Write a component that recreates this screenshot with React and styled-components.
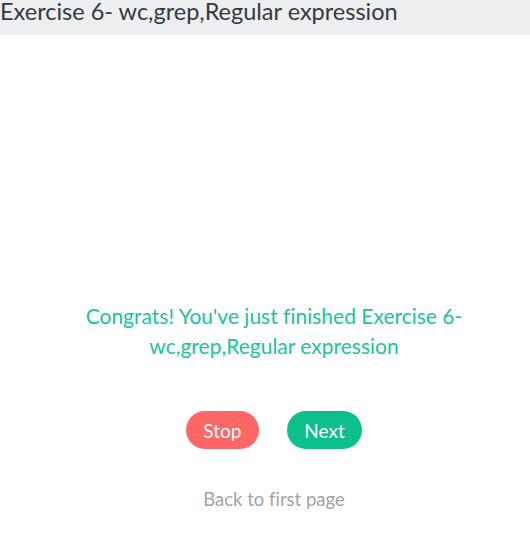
import React from "react";
import styled, { createGlobalStyle } from "styled-components";

const GlobalStyle = createGlobalStyle`
  body {
    margin: 0;
    background: #ffffff;
    font-family: Lato, "Open Sans", sans-serif;
    font-variant-ligatures: none;
  }
`;

const Header = styled.div`
  height: 36px;
  background: #eceef0;
  color: #333a40;
  font-size: 23.5px;
  line-height: 24px;
  padding-bottom: 12px;
  margin-top: -1px;
  box-sizing: border-box;
  white-space: nowrap;
`;

const Body = styled.div`
  display: flex;
  flex-direction: column;
  align-items: center;
  padding: 266px 0 0 18px;
`;

const Message = styled.p`
  margin: 0;
  width: 400px;
  text-align: center;
  color: #1bc49a;
  font-size: 21px;
  line-height: 30px;
`;

const Actions = styled.div`
  display: flex;
  gap: 28px;
  margin-top: 50px;
`;

const Button = styled.button`
  border: none;
  border-radius: 19px;
  height: 38px;
  padding: 0 17.5px;
  font-family: Lato, sans-serif;
  font-variant-ligatures: none;
  font-size: 19px;
  color: #ffffff;
  background: ${({ $variant }) => ($variant === "stop" ? "#ff6666" : "#0cbf8b")};
  cursor: pointer;
`;

const BackLink = styled.a`
  margin-top: 39px;
  color: #a3a3a3;
  font-size: 18.5px;
  text-decoration: none;
`;

export default function App() {
  return (
    <>
      <GlobalStyle />
      <Header>Exercise 6- wc,grep,Regular expression</Header>
      <Body>
        <Message>
          Congrats! You've just finished Exercise 6- wc,grep,Regular expression
        </Message>
        <Actions>
          <Button $variant="stop">Stop</Button>
          <Button $variant="next">Next</Button>
        </Actions>
        <BackLink href="#">Back to first page</BackLink>
      </Body>
    </>
  );
}
